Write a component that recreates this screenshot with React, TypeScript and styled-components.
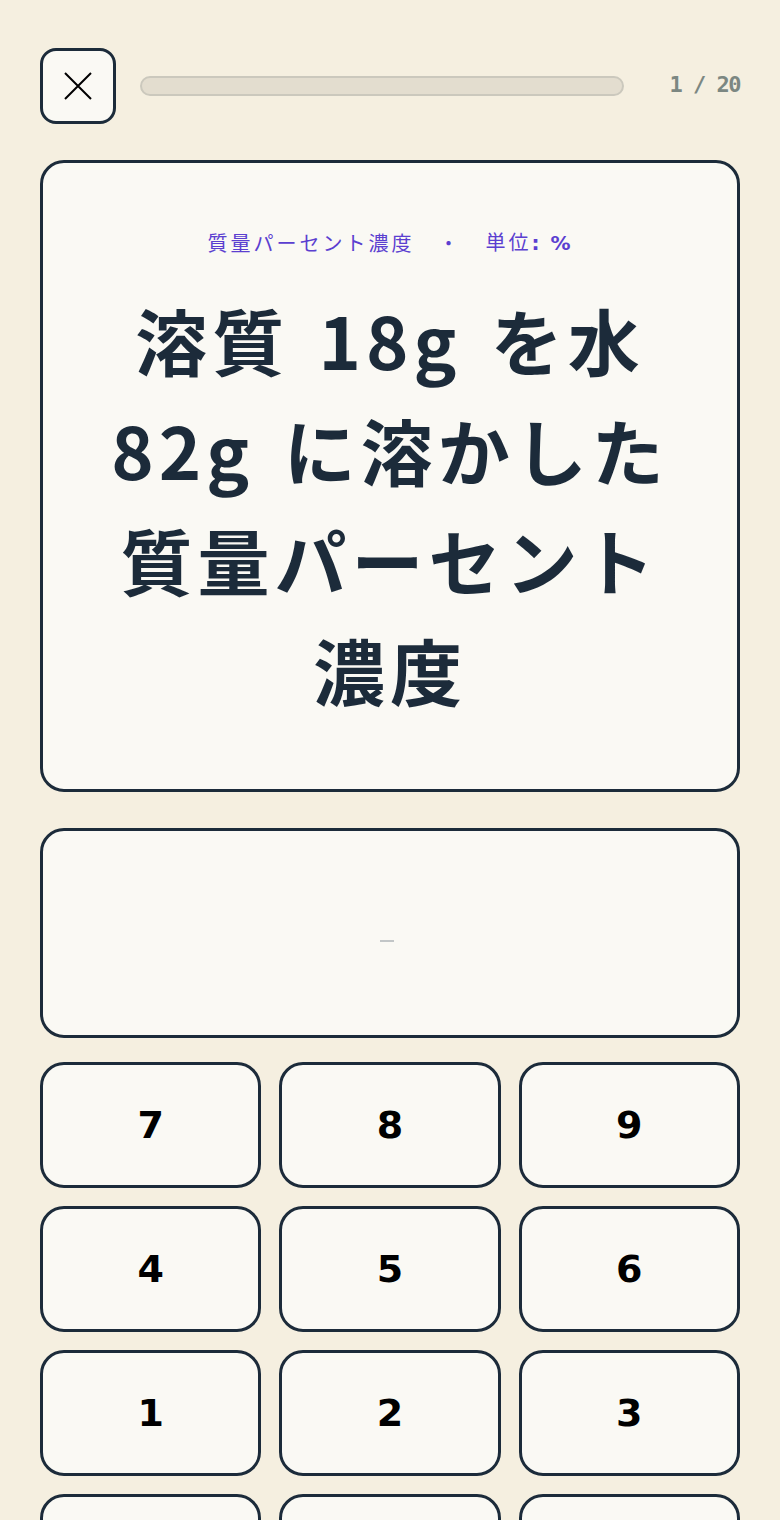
import React, { useState } from 'react';
import styled, { createGlobalStyle } from 'styled-components';

const GlobalStyle = createGlobalStyle`
  html, body {
    margin: 0;
    padding: 0;
    background: #f5efe0;
  }
  * { box-sizing: border-box; }
`;

const Page = styled.div`
  width: 780px;
  height: 1520px;
  overflow: hidden;
  padding: 48px 40px 0;
  display: flex;
  flex-direction: column;
  font-family: "Noto Sans CJK JP", "Noto Sans", sans-serif;
`;

const TopBar = styled.div`
  display: flex;
  align-items: center;
  gap: 24px;
  height: 76px;
  flex: none;
`;

const CloseButton = styled.button`
  width: 76px;
  height: 76px;
  flex: none;
  border: 3px solid #1c2b3a;
  border-radius: 16px;
  background: #faf9f4;
  display: flex;
  align-items: center;
  justify-content: center;
  padding: 0;
`;

const Track = styled.div`
  flex: 1;
  height: 20px;
  border: 2px solid #cbc8bd;
  border-radius: 10px;
  background: #e3ddcf;
  overflow: hidden;
`;

const Fill = styled.div`
  height: 100%;
  background: #5b3fd0;
`;

const Counter = styled.div`
  width: 92px;
  text-align: right;
  font-family: "DejaVu Sans Mono", monospace;
  font-weight: bold;
  font-size: 22px;
  letter-spacing: -1.5px;
  color: #7c8782;
  margin-top: -3px;
`;

const QuestionCard = styled.div`
  margin-top: 36px;
  height: 632px;
  flex: none;
  border: 3px solid #1c2b3a;
  border-radius: 24px;
  background: #faf9f4;
  display: flex;
  flex-direction: column;
  align-items: center;
  padding: 64px 40px 0;
`;

const Meta = styled.div`
  font-size: 20px;
  color: #5b3fd0;
  letter-spacing: 3px;
  display: flex;
  align-items: center;
  gap: 24px;
  line-height: 30px;
`;

const Unit = styled.span`
  font-family: "DejaVu Sans", sans-serif;
  font-weight: bold;
  letter-spacing: 2px;
`;

const Prompt = styled.div`
  margin-top: 26px;
  font-size: 72px;
  font-weight: bold;
  line-height: 110px;
  letter-spacing: 5px;
  word-spacing: 8px;
  text-align: center;
  color: #1c2b3a;
`;

const AnswerBox = styled.div`
  margin-top: 36px;
  height: 210px;
  flex: none;
  border: 3px solid #1c2b3a;
  border-radius: 24px;
  background: #faf9f4;
  display: flex;
  align-items: center;
  justify-content: center;
  font-size: 40px;
  color: #1c2b3a;
`;

const Placeholder = styled.div`
  width: 14px;
  height: 2px;
  margin-top: 16px;
  margin-right: 6px;
  background: #c2c6c7;
`;

const Keypad = styled.div`
  margin-top: 24px;
  display: grid;
  grid-template-columns: repeat(3, 1fr);
  grid-auto-rows: 126px;
  gap: 18px;
`;

const Key = styled.button`
  border: 3px solid #1c2b3a;
  border-radius: 24px;
  background: #faf9f4;
  font-family: "DejaVu Sans", sans-serif;
  font-weight: bold;
  font-size: 38px;
  color: #000;
  padding: 0;
`;

const keys = ['7', '8', '9', '4', '5', '6', '1', '2', '3', '.', '0', '⌫'];

export default function App() {
  const [value, setValue] = useState('');
  const current = 1;
  const total = 20;

  return (
    <>
      <GlobalStyle />
      <Page>
        <TopBar>
          <CloseButton aria-label="閉じる">
            <svg width="30" height="30" viewBox="0 0 30 30">
              <path d="M2 2 L28 28 M28 2 L2 28" stroke="#000" strokeWidth="2" />
            </svg>
          </CloseButton>
          <Track>
            <Fill style={{ width: `${((current - 1) / total) * 100}%` }} />
          </Track>
          <Counter>{current} / {total}</Counter>
        </TopBar>

        <QuestionCard>
          <Meta>
            <span>質量パーセント濃度</span>
            <span>・</span>
            <span>
              単位<Unit>: %</Unit>
            </span>
          </Meta>
          <Prompt>
            溶質 18g を水<br />
            82g に溶かした<br />
            質量パーセント<br />
            濃度
          </Prompt>
        </QuestionCard>

        <AnswerBox>{value ? value : <Placeholder />}</AnswerBox>

        <Keypad>
          {keys.map((k) => (
            <Key key={k} onClick={() => setValue(value + k)}>
              {k}
            </Key>
          ))}
        </Keypad>
      </Page>
    </>
  );
}
